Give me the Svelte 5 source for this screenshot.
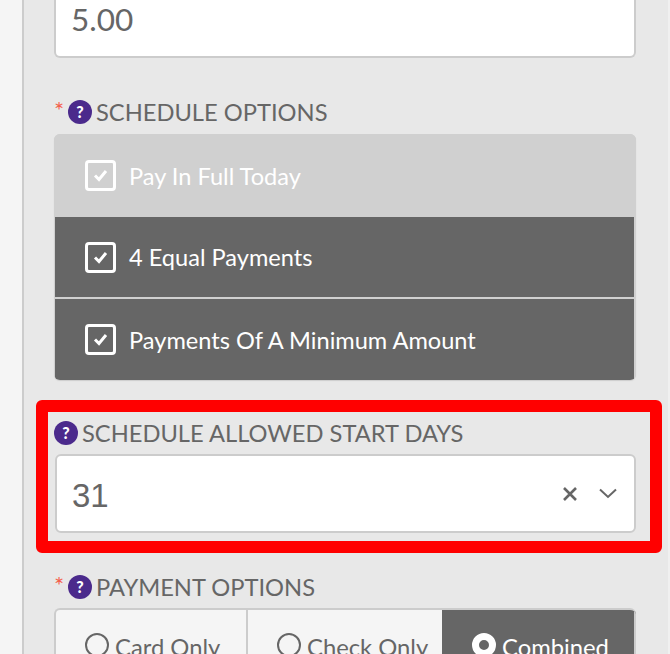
<script>
    const schedules = [
        { label: 'Pay In Full Today', disabled: true },
        { label: '4 Equal Payments', disabled: false },
        { label: 'Payments Of A Minimum Amount', disabled: false }
    ];
    const payments = [
        { label: 'Card Only', selected: false },
        { label: 'Check Only', selected: false },
        { label: 'Combined', selected: true }
    ];
</script>

{#snippet help()}
    <span class="help">?</span>
{/snippet}

<main>
    <div class="gutter"></div>
    <div class="panel">
        <div class="amount">5.00</div>

        <div class="label first"><span class="req">*</span>{@render help()}SCHEDULE OPTIONS</div>
        <div class="options">
            {#each schedules as s}
                <div class="option" class:disabled={s.disabled}>
                    <span class="check">
                        <svg width="15" height="13" viewBox="0 0 15 13"><path d="M2 6.5 L6 10.5 L13 2" fill="none" stroke="currentColor" stroke-width="3"/></svg>
                    </span>
                    {s.label}
                </div>
            {/each}
        </div>

        <div class="highlight">
            <div class="label">{@render help()}SCHEDULE ALLOWED START DAYS</div>
            <div class="select">
                <span class="value">31</span>
                <svg class="clear" width="16" height="16" viewBox="0 0 16 16"><path d="M2 2 L14 14 M14 2 L2 14" stroke="#666" stroke-width="2.6" fill="none"/></svg>
                <svg class="caret" width="18" height="11" viewBox="0 0 18 11"><path d="M1 1.5 L9 9 L17 1.5" stroke="#666" stroke-width="2" fill="none"/></svg>
            </div>
        </div>

        <div class="label pay"><span class="req">*</span>{@render help()}PAYMENT OPTIONS</div>
        <div class="segments">
            {#each payments as p}
                <div class="segment" class:selected={p.selected}>
                    <span class="radio"></span>{p.label}
                </div>
            {/each}
        </div>
    </div>
</main>

<style>
    :global(body) {
        margin: 0;
        background: #e8e8e8;
    }

    main {
        display: flex;
        width: 670px;
        height: 654px;
        overflow: hidden;
        font-family: Lato, sans-serif;
        color: #666;
    }

    .gutter {
        width: 22px;
        flex: none;
        background: #f5f5f5;
        border-right: 2px solid #ccc;
    }

    .panel {
        flex: 1;
        padding-left: 30px;
        background: #e8e8e8;
        border-right: 2px solid #f0f0f0;
    }

    .panel > * {
        width: 582px;
        box-sizing: border-box;
    }

    .amount {
        height: 58px;
        padding: 0 0 19px 15px;
        display: flex;
        align-items: flex-end;
        background: #fff;
        border: 2px solid #ccc;
        border-top: 0;
        border-radius: 0 0 6px 6px;
        font-size: 31.5px;
        line-height: 36px;
    }

    .label {
        display: flex;
        align-items: center;
        height: 28px;
        font-size: 23.7px;
        white-space: nowrap;
    }

    .first {
        margin-top: 40px;
        margin-bottom: 8px;
    }

    .req {
        width: 14px;
        margin-top: -6px;
        color: #f4604c;
        font-size: 24px;
    }

    .help {
        width: 24px;
        height: 24px;
        margin-right: 4px;
        flex: none;
        border-radius: 50%;
        background: #4b2a8c;
        color: #fff;
        font-size: 16px;
        font-weight: 900;
        line-height: 24px;
        text-align: center;
    }

    .options {
        height: 246px;
        border-radius: 6px;
        overflow: hidden;
        background: #d0d0d0;
        box-shadow: 0 1px 1px #ccc;
    }

    .option {
        display: flex;
        align-items: center;
        height: 80px;
        padding-left: 30px;
        gap: 13px;
        color: #fff;
        font-size: 23.6px;
        background: #666;
        box-sizing: border-box;
        margin: 0 2px 2px 1px;
    }

    .option:last-child {
        height: 81px;
        margin-bottom: 0;
    }

    .option.disabled {
        height: 83px;
        background: #d0d0d0;
        margin: 0;
        padding-left: 31px;
    }

    .check {
        width: 31px;
        height: 31px;
        box-sizing: border-box;
        display: flex;
        align-items: center;
        justify-content: center;
        border: 3px solid #fff;
        border-radius: 4px;
    }

    .highlight {
        width: 626px !important;
        height: 153px;
        margin: 20px 0 0 -18px;
        padding: 7px 14px 8px 7px;
        border: 12px solid #f00;
        border-radius: 6px;
    }

    .highlight .label {
        height: 28px;
        margin: 0 0 7px -1px;
    }

    .select {
        display: flex;
        align-items: center;
        height: 79px;
        padding: 5px 17px 0 15px;
        box-sizing: border-box;
        background: #fff;
        border: 2px solid #ccc;
        border-radius: 6px;
        font-size: 33px;
        font-family: "Liberation Sans", sans-serif;
    }

    .value {
        flex: 1;
    }

    .select svg {
        margin-top: -5px;
    }

    .clear {
        margin-right: 21px;
    }

    .pay {
        margin-top: 20px;
        margin-bottom: 7px;
    }

    .segments {
        display: flex;
        height: 90px;
        border: 2px solid #ccc;
        border-right: 0;
        border-radius: 6px;
        overflow: hidden;
        background: #f5f5f5;
    }

    .segment {
        flex: none;
        width: 192px;
        display: flex;
        align-items: flex-start;
        padding: 23px 0 0 29px;
        box-sizing: border-box;
        font-size: 23.8px;
        line-height: 28px;
        gap: 6px;
        border-right: 2px solid #ccc;
    }

    .segment:nth-child(2) {
        width: 194px;
        border-right: 0;
    }

    .segment.selected {
        width: 194px;
        padding-left: 30px;
        background: #666;
        color: #fff;
        border-right: 2px solid #ccc;
    }

    .radio {
        width: 24px;
        height: 24px;
        box-sizing: border-box;
        flex: none;
        border: 2px solid #666;
        border-radius: 50%;
    }

    .selected .radio {
        border: 7px solid #fff;
        background: #666;
    }
</style>
